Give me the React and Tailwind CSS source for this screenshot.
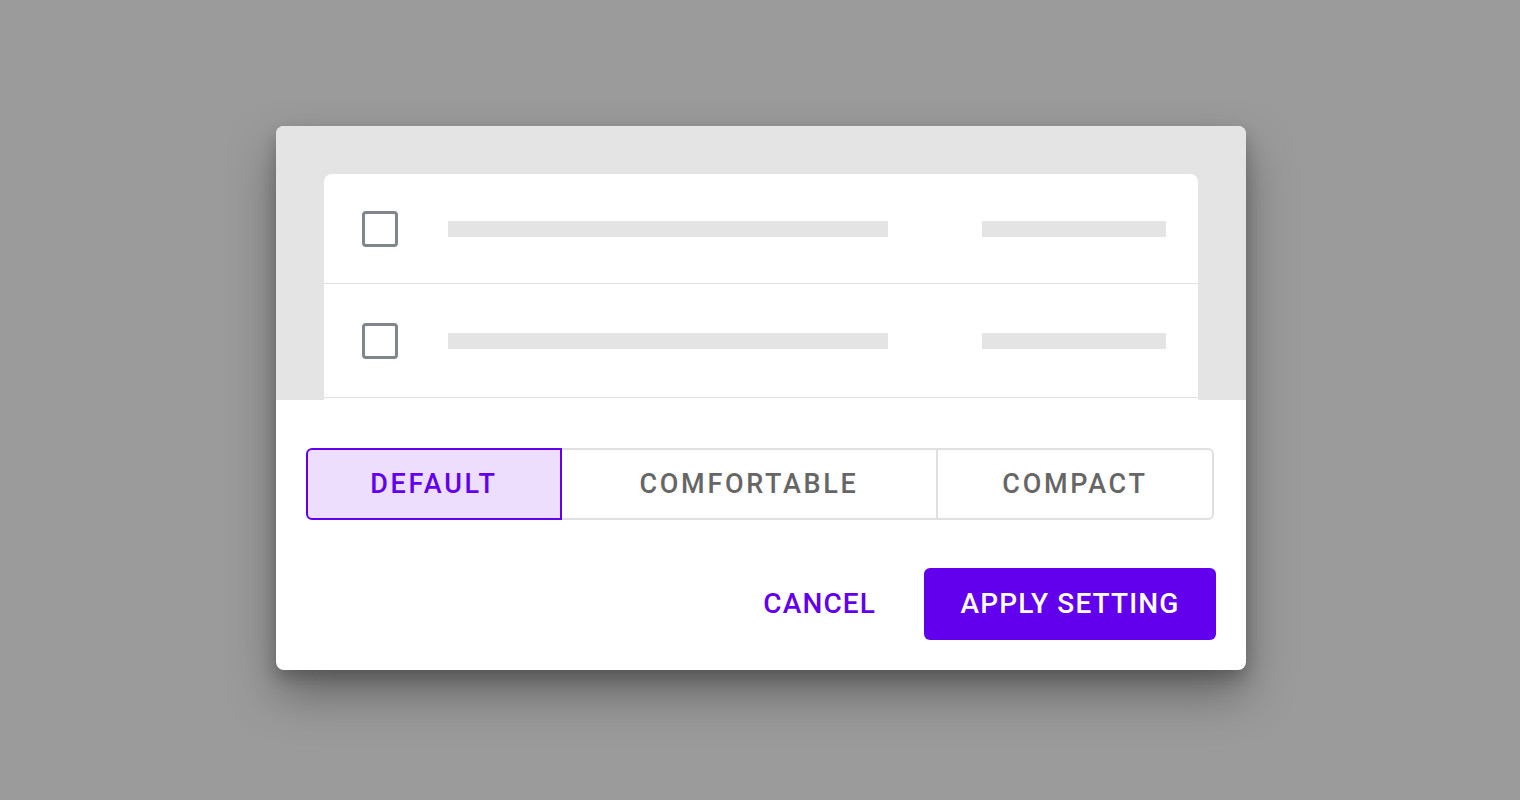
import { useState } from 'react';

const SkeletonRow = ({ last }) => (
  <div className={`flex items-center border-b border-[#e0e0e0] ${last ? 'h-[114px]' : 'h-[110px]'}`}>
    <div className="ml-[38px] w-[36px] h-[36px] rounded-[4px] border-[3px] border-[#80868b]" />
    <div className="ml-[50px] w-[440px] h-[16px] bg-[#e4e4e4]" />
    <div className="ml-[94px] w-[184px] h-[16px] bg-[#e4e4e4]" />
  </div>
);

const App = () => {
  const [density, setDensity] = useState('default');

  const options = [
    { id: 'default', label: 'DEFAULT', width: 'w-[256px]' },
    { id: 'comfortable', label: 'COMFORTABLE', width: 'w-[375px]' },
    { id: 'compact', label: 'COMPACT', width: 'w-[277px]' },
  ];

  return (
    <div className="h-[800px] w-full bg-[#9b9b9b] flex items-center justify-center font-['Roboto',sans-serif]">
      <div className="w-[970px] h-[544px] bg-white rounded-[8px] overflow-hidden shadow-[0_24px_48px_rgba(0,0,0,0.35),0_8px_16px_rgba(0,0,0,0.2)] flex flex-col ml-[2px] -mt-[4px]">
        {/* Preview */}
        <div className="h-[274px] bg-[#e4e4e4] px-[48px] pt-[48px]">
          <div className="bg-white rounded-t-[8px] h-full">
            <SkeletonRow />
            <SkeletonRow last />
          </div>
        </div>

        {/* Density toggle */}
        <div className="flex mt-[48px] ml-[30px] h-[72px]">
          {options.map((opt, i) => {
            const active = density === opt.id;
            return (
              <button
                key={opt.id}
                onClick={() => setDensity(opt.id)}
                className={`${opt.width} h-full flex items-center justify-center pt-[1px] text-[27px] font-medium tracking-[0.1em] ${
                  i === 0 ? 'rounded-l-[6px]' : ''
                } ${i === options.length - 1 ? 'rounded-r-[6px]' : ''} ${
                  active
                    ? 'bg-[#ecdefc] text-[#6200ee] border-2 border-[#6200ee]'
                    : `text-[#666666] border-2 border-[#e0e0e0] ${i === 1 ? 'border-l-0 border-r' : ''} ${i === 2 ? 'border-l' : ''}`
                }`}
              >
                {opt.label}
              </button>
            );
          })}
        </div>

        {/* Actions */}
        <div className="flex justify-end items-center mt-[48px] mr-[30px] h-[72px]">
          <button className="text-[28px] font-medium tracking-[0.04em] text-[#6200ee] px-[24px] h-full mr-[24px]">
            CANCEL
          </button>
          <button className="w-[292px] h-full rounded-[6px] bg-[#6200ee] text-white text-[28px] font-medium tracking-[0.04em]">
            APPLY SETTING
          </button>
        </div>
      </div>
    </div>
  );
};

export default App;
